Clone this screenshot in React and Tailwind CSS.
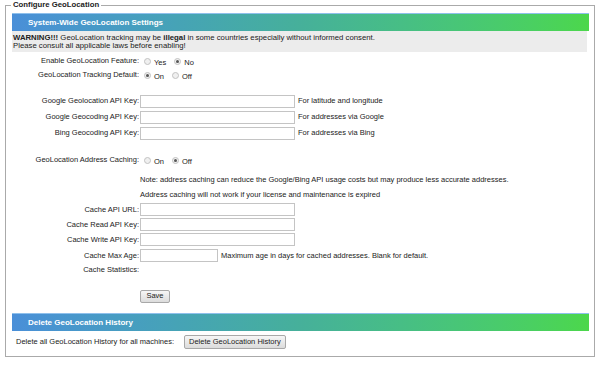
import React from 'react';

const font = { fontFamily: '"Liberation Sans", Tahoma, sans-serif' };

const Radio = ({ checked, label }) => (
  <span className="flex items-center ml-[4px] mr-[4px]">
    <span className="w-[7px] h-[7px] rounded-full border border-[#c2c2c2] bg-[#f0f0f0] flex items-center justify-center">
      {checked && <span className="w-[3px] h-[3px] rounded-full bg-[#555]" />}
    </span>
    <span className="ml-[3px] mt-[3px]">{label}</span>
  </span>
);

const Row = ({ label, h = 'h-[14px]', mt = '', children }) => (
  <div className={`flex items-center ${h} ${mt}`}>
    <div className="w-[127px] text-right">{label}</div>
    <div className="flex items-center ml-[1px]">{children}</div>
  </div>
);

const TextBox = ({ w = 'w-[155px]' }) => (
  <span className={`${w} h-[13px] border border-[#c4c4c4] bg-white block`} />
);

const Header = ({ title }) => (
  <div className="h-[18px] flex items-center pl-[16px] border-t border-[#8fc0ec] bg-gradient-to-r from-[#4a8fd8] via-[#46b09a] to-[#4cd74b] text-white font-bold text-[8px]">
    {title}
  </div>
);

export default function App() {
  return (
    <div className="w-[601px] h-[366px] bg-white text-[7.5px] text-[#222] leading-[8px]" style={font}>
      <div className="pt-[1px] pl-[5px]">
        <fieldset className="border border-[#aaa] w-[590px] h-[356px] pl-[6px] pr-[5px]">
          <legend className="-ml-[1px] px-[2px] font-bold text-[7.75px] text-[#222]">Configure GeoLocation</legend>
          <div className="mt-[4px]">
            <Header title="System-Wide GeoLocation Settings" />
            <div className="bg-[#ececec] h-[21px] pt-[3px] pl-[1px] mr-[2px] text-[7.75px]">
              <div className="leading-[8px]">
                <b>WARNING!!!</b> GeoLocation tracking may be <b>illegal</b> in some countries especially without informed consent.
              </div>
              <div className="leading-[8px]">Please consult all applicable laws before enabling!</div>
            </div>

            <Row label="Enable GeoLocation Feature:" mt="mt-[2px]">
              <Radio label="Yes" />
              <Radio checked label="No" />
            </Row>
            <Row label="GeoLocation Tracking Default:">
              <Radio checked label="On" />
              <Radio label="Off" />
            </Row>

            <Row label="Google Geolocation API Key:" h="h-[16px]" mt="mt-[11px]">
              <TextBox />
              <span className="ml-[3px]">For latitude and longitude</span>
            </Row>
            <Row label="Google Geocoding API Key:" h="h-[16px]">
              <TextBox />
              <span className="ml-[3px]">For addresses via Google</span>
            </Row>
            <Row label="Bing Geocoding API Key:" h="h-[16px]">
              <TextBox />
              <span className="ml-[3px]">For addresses via Bing</span>
            </Row>

            <Row label="GeoLocation Address Caching:" mt="mt-[12px]">
              <Radio label="On" />
              <Radio checked label="Off" />
            </Row>
            <Row label="" mt="mt-[6px]">
              <span>Note: address caching can reduce the Google/Bing API usage costs but may produce less accurate addresses.</span>
            </Row>
            <Row label="" mt="mt-[1px]">
              <span>Address caching will not work if your license and maintenance is expired</span>
            </Row>
            <Row label="Cache API URL:" h="h-[15px]">
              <TextBox />
            </Row>
            <Row label="Cache Read API Key:" h="h-[15px]">
              <TextBox />
            </Row>
            <Row label="Cache Write API Key:" h="h-[15px]">
              <TextBox />
            </Row>
            <Row label="Cache Max Age:" h="h-[15px]" mt="mt-[1px]">
              <TextBox w="w-[78px]" />
              <span className="ml-[3px]">Maximum age in days for cached addresses. Blank for default.</span>
            </Row>
            <Row label="Cache Statistics:" />

            <Row label="" h="h-[14px]" mt="mt-[12px]">
              <button className="h-[13px] w-[30px] border border-[#a8a8a8] rounded-[2px] bg-gradient-to-b from-[#f6f6f6] to-[#dcdcdc] text-[7.5px] text-[#222] leading-[8px]">
                Save
              </button>
            </Row>

            <div className="mt-[10px]">
              <Header title="Delete GeoLocation History" />
            </div>
            <div className="flex items-center h-[18px] mt-[2px] pl-[4px]">
              <span>Delete all GeoLocation History for all machines:</span>
              <button className="ml-[10px] h-[14px] px-[4px] border border-[#a8a8a8] rounded-[2px] bg-gradient-to-b from-[#f6f6f6] to-[#dcdcdc] text-[7.5px] text-[#222] leading-[8px]">
                Delete GeoLocation History
              </button>
            </div>
          </div>
        </fieldset>
      </div>
    </div>
  );
}
